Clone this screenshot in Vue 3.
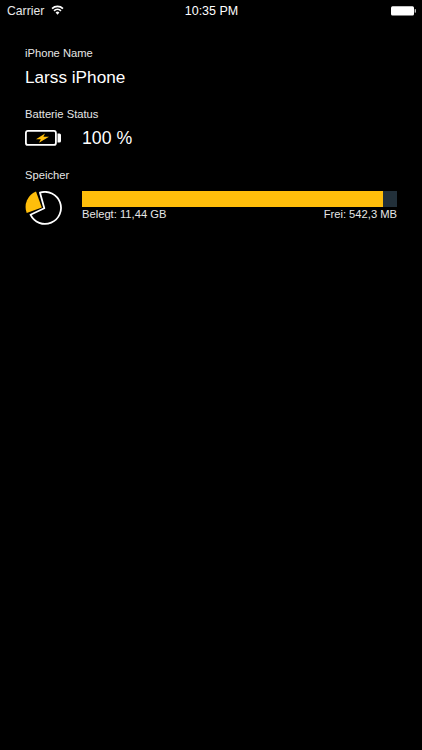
<script setup>
const usedPercent = 95.5
</script>

<template>
  <div class="screen">
    <header class="status">
      <div class="status-left">
        <span>Carrier</span>
        <svg class="wifi" width="13" height="10" viewBox="0 0 14 11">
          <path d="M1 4 A8.6 8.6 0 0 1 13 4" fill="none" stroke="#fff" stroke-width="1.9" />
          <path d="M3.2 6.4 A5.4 5.4 0 0 1 10.8 6.4" fill="none" stroke="#fff" stroke-width="1.9" />
          <path d="M4.9 8.2 L7 10.6 L9.1 8.2 A2.9 2.9 0 0 0 4.9 8.2 Z" fill="#fff" />
        </svg>
      </div>
      <div class="status-time">10:35 PM</div>
      <div class="status-right">
        <svg width="25" height="10" viewBox="0 0 25 10">
          <rect x="0" y="0.2" width="23" height="9.4" rx="1.5" fill="#fff" />
          <rect x="23.6" y="3.2" width="1.4" height="3.4" fill="#bbb" />
        </svg>
      </div>
    </header>

    <main class="content">
      <section class="block name-block">
        <div class="label">iPhone Name</div>
        <div class="device">Larss iPhone</div>
      </section>

      <section class="block battery-block">
        <div class="label">Batterie Status</div>
        <div class="row battery-row">
          <svg class="icon" width="37" height="20" viewBox="0 0 37 20">
            <rect x="0.9" y="2.9" width="30" height="14" rx="2" fill="none" stroke="#fff" stroke-width="1.8" />
            <path d="M32.5 5.5 H34.5 Q36 5.5 36 7 V13 Q36 14.5 34.5 14.5 H32.5 Z" fill="#fff" />
            <path d="M20 5.5 L11 11.2 H15.8 L14 14.8 L24 8.8 H18.4 Z" fill="#ffbe0b" />
          </svg>
          <div class="percent">100 %</div>
        </div>
      </section>

      <section class="block">
        <div class="label">Speicher</div>
        <div class="row storage-row">
          <svg class="icon" width="37" height="34" viewBox="0 0 37 34">
            <path d="M15 1.7 A16 16 0 1 1 5.5 23.7 L19.3 17.3 Z" fill="none" stroke="#fff" stroke-width="1.8" stroke-linejoin="round" />
            <path d="M11 0.5 L16.8 16.4 L1.7 21.9 A16.7 16.7 0 0 1 11 0.5 Z" fill="#ffbe0b" />
          </svg>
          <div class="meter">
            <div class="track">
              <div class="fill" :style="{ width: usedPercent + '%' }"></div>
            </div>
            <div class="meter-labels">
              <span>Belegt: 11,44 GB</span>
              <span>Frei: 542,3 MB</span>
            </div>
          </div>
        </div>
      </section>
    </main>
  </div>
</template>

<style scoped>
.screen {
  width: 422px;
  height: 750px;
  background: #000;
  color: #fff;
  font-family: "Liberation Sans", Arial, sans-serif;
  overflow: hidden;
}
.status {
  height: 21px;
  padding: 0 6px 0 7px;
  display: grid;
  grid-template-columns: 1fr auto 1fr;
  align-items: center;
  font-size: 12.5px;
}
.status-left {
  display: flex;
  align-items: center;
  gap: 7px;
  color: #e8e8e8;
  font-size: 12.2px;
}
.wifi {
  margin-top: -2px;
}
.status-time {
  font-size: 12.5px;
}
.status-right {
  display: flex;
  justify-content: flex-end;
}
.content {
  padding: 25px 25px 0;
}
.block {
  display: flex;
  flex-direction: column;
}
.name-block {
  height: 61px;
}
.battery-block {
  height: 61px;
}
.label {
  font-size: 11.2px;
  line-height: 14px;
  color: #e6e6e6;
}
.device {
  font-size: 17.2px;
  line-height: 20px;
  margin-top: 7px;
}
.row {
  display: flex;
  gap: 20px;
}
.battery-row {
  align-items: center;
  margin-top: 6px;
}
.percent {
  font-size: 17.7px;
  line-height: 22px;
}
.storage-row {
  margin-top: 9px;
}
.meter {
  flex: 1;
  min-width: 0;
}
.track {
  height: 16px;
  background: #22303a;
}
.fill {
  height: 100%;
  background: #ffbe0b;
}
.meter-labels {
  display: flex;
  justify-content: space-between;
  font-size: 11.2px;
  line-height: 14px;
  color: #e6e6e6;
}
</style>

<style>
html, body {
  background: #000;
}
</style>
